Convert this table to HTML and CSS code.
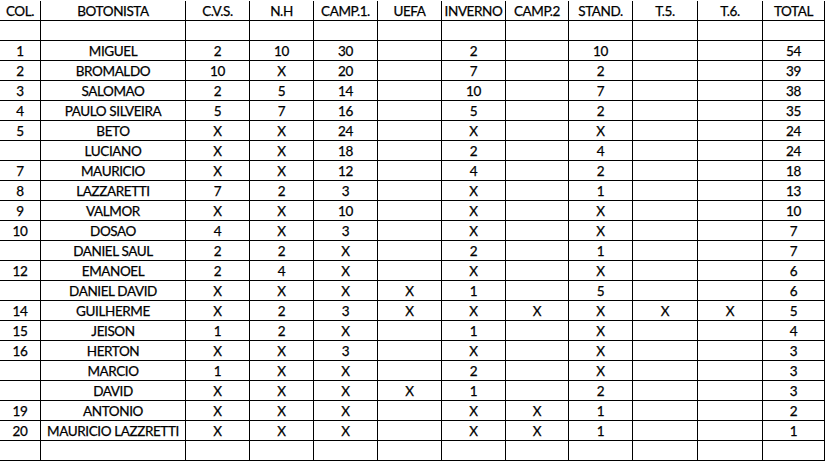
FILE: index.html
```html
<!DOCTYPE html>
<html lang="pt">
<head>
<meta charset="utf-8">
<title>Ranking Botonistas</title>
<link rel="stylesheet" href="styles.css">
</head>
<body>
<div class="sheet">
<div class="c">COL.</div><div class="c">BOTONISTA</div><div class="c">C.V.S.</div><div class="c">N.H</div><div class="c">CAMP.1.</div><div class="c">UEFA</div><div class="c">INVERNO</div><div class="c">CAMP.2</div><div class="c">STAND.</div><div class="c">T.5.</div><div class="c">T.6.</div><div class="c">TOTAL</div>
<div class="c"></div><div class="c"></div><div class="c"></div><div class="c"></div><div class="c"></div><div class="c"></div><div class="c"></div><div class="c"></div><div class="c"></div><div class="c"></div><div class="c"></div><div class="c"></div>
<div class="c">1</div><div class="c">MIGUEL</div><div class="c">2</div><div class="c">10</div><div class="c">30</div><div class="c"></div><div class="c">2</div><div class="c"></div><div class="c">10</div><div class="c"></div><div class="c"></div><div class="c">54</div>
<div class="c">2</div><div class="c">BROMALDO</div><div class="c">10</div><div class="c">X</div><div class="c">20</div><div class="c"></div><div class="c">7</div><div class="c"></div><div class="c">2</div><div class="c"></div><div class="c"></div><div class="c">39</div>
<div class="c">3</div><div class="c">SALOMAO</div><div class="c">2</div><div class="c">5</div><div class="c">14</div><div class="c"></div><div class="c">10</div><div class="c"></div><div class="c">7</div><div class="c"></div><div class="c"></div><div class="c">38</div>
<div class="c">4</div><div class="c">PAULO SILVEIRA</div><div class="c">5</div><div class="c">7</div><div class="c">16</div><div class="c"></div><div class="c">5</div><div class="c"></div><div class="c">2</div><div class="c"></div><div class="c"></div><div class="c">35</div>
<div class="c">5</div><div class="c">BETO</div><div class="c">X</div><div class="c">X</div><div class="c">24</div><div class="c"></div><div class="c">X</div><div class="c"></div><div class="c">X</div><div class="c"></div><div class="c"></div><div class="c">24</div>
<div class="c"></div><div class="c">LUCIANO</div><div class="c">X</div><div class="c">X</div><div class="c">18</div><div class="c"></div><div class="c">2</div><div class="c"></div><div class="c">4</div><div class="c"></div><div class="c"></div><div class="c">24</div>
<div class="c">7</div><div class="c">MAURICIO</div><div class="c">X</div><div class="c">X</div><div class="c">12</div><div class="c"></div><div class="c">4</div><div class="c"></div><div class="c">2</div><div class="c"></div><div class="c"></div><div class="c">18</div>
<div class="c">8</div><div class="c">LAZZARETTI</div><div class="c">7</div><div class="c">2</div><div class="c">3</div><div class="c"></div><div class="c">X</div><div class="c"></div><div class="c">1</div><div class="c"></div><div class="c"></div><div class="c">13</div>
<div class="c">9</div><div class="c">VALMOR</div><div class="c">X</div><div class="c">X</div><div class="c">10</div><div class="c"></div><div class="c">X</div><div class="c"></div><div class="c">X</div><div class="c"></div><div class="c"></div><div class="c">10</div>
<div class="c">10</div><div class="c">DOSAO</div><div class="c">4</div><div class="c">X</div><div class="c">3</div><div class="c"></div><div class="c">X</div><div class="c"></div><div class="c">X</div><div class="c"></div><div class="c"></div><div class="c">7</div>
<div class="c"></div><div class="c">DANIEL SAUL</div><div class="c">2</div><div class="c">2</div><div class="c">X</div><div class="c"></div><div class="c">2</div><div class="c"></div><div class="c">1</div><div class="c"></div><div class="c"></div><div class="c">7</div>
<div class="c">12</div><div class="c">EMANOEL</div><div class="c">2</div><div class="c">4</div><div class="c">X</div><div class="c"></div><div class="c">X</div><div class="c"></div><div class="c">X</div><div class="c"></div><div class="c"></div><div class="c">6</div>
<div class="c"></div><div class="c">DANIEL DAVID</div><div class="c">X</div><div class="c">X</div><div class="c">X</div><div class="c">X</div><div class="c">1</div><div class="c"></div><div class="c">5</div><div class="c"></div><div class="c"></div><div class="c">6</div>
<div class="c">14</div><div class="c">GUILHERME</div><div class="c">X</div><div class="c">2</div><div class="c">3</div><div class="c">X</div><div class="c">X</div><div class="c">X</div><div class="c">X</div><div class="c">X</div><div class="c">X</div><div class="c">5</div>
<div class="c">15</div><div class="c">JEISON</div><div class="c">1</div><div class="c">2</div><div class="c">X</div><div class="c"></div><div class="c">1</div><div class="c"></div><div class="c">X</div><div class="c"></div><div class="c"></div><div class="c">4</div>
<div class="c">16</div><div class="c">HERTON</div><div class="c">X</div><div class="c">X</div><div class="c">3</div><div class="c"></div><div class="c">X</div><div class="c"></div><div class="c">X</div><div class="c"></div><div class="c"></div><div class="c">3</div>
<div class="c"></div><div class="c">MARCIO</div><div class="c">1</div><div class="c">X</div><div class="c">X</div><div class="c"></div><div class="c">2</div><div class="c"></div><div class="c">X</div><div class="c"></div><div class="c"></div><div class="c">3</div>
<div class="c"></div><div class="c">DAVID</div><div class="c">X</div><div class="c">X</div><div class="c">X</div><div class="c">X</div><div class="c">1</div><div class="c"></div><div class="c">2</div><div class="c"></div><div class="c"></div><div class="c">3</div>
<div class="c">19</div><div class="c">ANTONIO</div><div class="c">X</div><div class="c">X</div><div class="c">X</div><div class="c"></div><div class="c">X</div><div class="c">X</div><div class="c">1</div><div class="c"></div><div class="c"></div><div class="c">2</div>
<div class="c">20</div><div class="c">MAURICIO LAZZRETTI</div><div class="c">X</div><div class="c">X</div><div class="c">X</div><div class="c"></div><div class="c">X</div><div class="c">X</div><div class="c">1</div><div class="c"></div><div class="c"></div><div class="c">1</div>
<div class="c"></div><div class="c"></div><div class="c"></div><div class="c"></div><div class="c"></div><div class="c"></div><div class="c"></div><div class="c"></div><div class="c"></div><div class="c"></div><div class="c"></div><div class="c"></div>
</div>
</body>
</html>
```
FILE: styles.css
```css
html, body {
  margin: 0;
  padding: 0;
  background: #ffffff;
}
body {
  font-family: Lato, "Liberation Sans", sans-serif;
  font-size: 13.5px;
  letter-spacing: -0.4px;
  color: #000;
}
.sheet {
  display: grid;
  grid-template-columns: 41px 145px 64px 64px 64px 64px 64px 63px 64px 65px 65px 62px;
  grid-auto-rows: 20px;
  padding-top: 1px;
  width: 825px;
}
.c {
  box-sizing: border-box;
  border-right: 1px solid #000;
  border-bottom: 1px solid #000;
  text-align: center;
  line-height: 20px;
  white-space: nowrap;
  overflow: hidden;
  -webkit-text-stroke: 0.25px #000;
}
```
